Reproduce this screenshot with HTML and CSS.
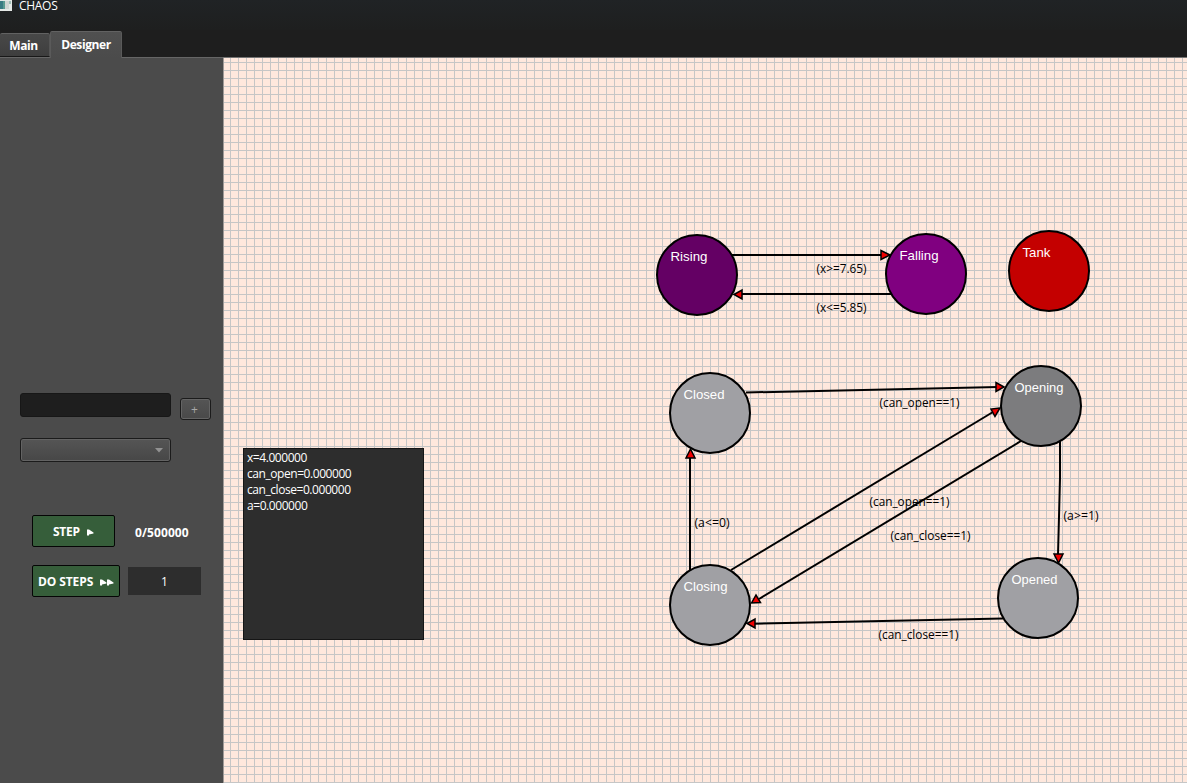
FILE: index.html
```html
<!DOCTYPE html>
<html lang="en">
<head>
<meta charset="utf-8">
<title>CHAOS</title>
<link rel="stylesheet" href="styles.css">
</head>
<body>
<div class="window">
  <header class="titlebar">
    <svg class="app-icon" width="12" height="11" viewBox="0 0 12 11"><path fill="#e4e8e6" d="M0 0h12v11H0z"/><path fill="#5b9a91" d="M0 1h9v8H0z"/><path fill="#397b83" d="M0 1h3v8H0z"/><path fill="#d0d5d3" d="M5 1h4v8H5z"/><path fill="#9cbcb5" d="M9 1h2v3H9z"/></svg>
    <span class="title">CHAOS</span>
  </header>
  <nav class="tabs">
    <div class="tab tab-main"><span>Main</span></div>
    <div class="tab tab-active"><span>Designer</span></div>
  </nav>
  <main class="body">
    <aside class="sidebar">
      <div class="row add-row">
        <div class="field"></div>
        <div class="add">+</div>
      </div>
      <div class="select"><svg width="8" height="5" viewBox="0 0 8 5"><path fill="#929292" d="M0 0h8L4 4.5z"/></svg></div>
      <div class="row step-row">
        <div class="btn step"><span>STEP</span><svg width="7" height="7" viewBox="0 0 7 7"><path fill="#fff" d="M0 0.500h2L6.500 3.500V4.500L2 5.500V6.500H0z"/></svg></div>
        <span class="count">0/500000</span>
      </div>
      <div class="row do-row">
        <div class="btn do"><span>DO STEPS</span><svg width="14" height="7" viewBox="0 0 14 7"><path fill="#fff" d="M0 0.500h2L6.500 3.500V4.500L2 5.500V6.500H0zM7 0.500h2L13.500 3.500V4.500L9 5.500V6.500H7z"/></svg></div>
        <div class="amount">1</div>
      </div>
    </aside>
    <section class="canvas">
      <svg class="diagram" width="964" height="726" viewBox="223 57 964 726">
        <defs>
          <pattern id="grid" x="230" y="62" width="8" height="8" patternUnits="userSpaceOnUse"><path fill="#c6c6c6" d="M0 0h8v1H0zM0 1h1v7H0z"/></pattern>
        </defs>
        <path fill="#ffe8dd" d="M223 57h964v726H223z"/>
        <path fill="url(#grid)" d="M223 58h964v725H223z"/>
        <path fill="#747474" d="M223 57h964v1H223z"/>
        <path fill="#a09a97" d="M223 58h1v725h-1z"/>
        <g class="edge-label">
          <text x="816.500" y="273" textLength="50" lengthAdjust="spacingAndGlyphs">(x&gt;=7.65)</text>
          <text x="816.500" y="312" textLength="50" lengthAdjust="spacingAndGlyphs">(x&lt;=5.85)</text>
          <text x="879.500" y="407" textLength="80" lengthAdjust="spacingAndGlyphs">(can_open==1)</text>
          <text x="869.500" y="506" textLength="80" lengthAdjust="spacingAndGlyphs">(can_open==1)</text>
          <text x="890.500" y="540" textLength="80" lengthAdjust="spacingAndGlyphs">(can_close==1)</text>
          <text x="878.500" y="639" textLength="80" lengthAdjust="spacingAndGlyphs">(can_close==1)</text>
          <text x="694.500" y="527" textLength="35" lengthAdjust="spacingAndGlyphs">(a&lt;=0)</text>
          <text x="1063.500" y="520" textLength="35" lengthAdjust="spacingAndGlyphs">(a&gt;=1)</text>
        </g>
        <g class="edge">
          <path d="M732 255H882"/>
          <path d="M893 294H742"/>
          <path d="M746 392.5L998 387"/>
          <path d="M690 572V457"/>
          <path d="M731 570L993 412"/>
          <path d="M1021 441L759 599"/>
          <path d="M1060 440V478L1058 555"/>
          <path d="M1003 618.5L754 623.7"/>
        </g>
        <g class="arrow">
          <path d="M890 255L881 250.5V259.5Z"/>
          <path d="M734 294.5L742 290V299Z"/>
          <path d="M1004 387L996 382.5V391.5Z"/>
          <path d="M690.5 449L686 458H695Z"/>
          <path d="M1000 408L991 409L995 416.500Z"/>
          <path d="M751.500 603L756 595L760.500 602.500Z"/>
          <path d="M1058.500 563L1054 554H1063Z"/>
          <path d="M747 623.500L755 619V628Z"/>
        </g>
        <g class="node">
          <circle cx="697" cy="275" r="40" fill="#640064"/>
          <circle cx="926" cy="274" r="40" fill="#800080"/>
          <circle cx="1049" cy="271" r="40" fill="#c40000"/>
          <circle cx="710" cy="413" r="40" fill="#a0a0a4"/>
          <circle cx="1041" cy="406" r="40" fill="#7c7c7e"/>
          <circle cx="710" cy="605" r="40" fill="#a0a0a4"/>
          <circle cx="1038" cy="598" r="40" fill="#a0a0a4"/>
        </g>
        <g class="node-label">
          <text x="670.500" y="261" textLength="37" lengthAdjust="spacingAndGlyphs">Rising</text>
          <text x="899.500" y="260" textLength="39" lengthAdjust="spacingAndGlyphs">Falling</text>
          <text x="1022.500" y="257" textLength="28" lengthAdjust="spacingAndGlyphs">Tank</text>
          <text x="683.500" y="399" textLength="41" lengthAdjust="spacingAndGlyphs">Closed</text>
          <text x="1014.500" y="392" textLength="49" lengthAdjust="spacingAndGlyphs">Opening</text>
          <text x="683.500" y="591" textLength="44" lengthAdjust="spacingAndGlyphs">Closing</text>
          <text x="1011.500" y="584" textLength="46" lengthAdjust="spacingAndGlyphs">Opened</text>
        </g>
      </svg>
      <div class="vars">
        <div>x=4.000000</div>
        <div>can_open=0.000000</div>
        <div>can_close=0.000000</div>
        <div>a=0.000000</div>
      </div>
    </section>
  </main>
</div>
</body>
</html>
```
FILE: styles.css
```css
* { box-sizing: border-box; }
body { margin: 0; overflow: hidden; font: 12px/16px "Open Sans", "Noto Sans", sans-serif; color: #fff; }
.window { width: 1187px; height: 783px; display: flex; flex-direction: column; background: #1e1e1e; }
.titlebar { height: 30px; display: flex; align-items: flex-start; background: linear-gradient(#202325, #1e1f1f); }
.app-icon { display: block; }
.title { padding-left: 7px; line-height: 12px; letter-spacing: -0.3px; }
.tabs { height: 27px; display: flex; align-items: flex-end; background: #1e1e1e; font-weight: 700; letter-spacing: -0.4px; }
.tab { display: flex; justify-content: center; border: 1px solid #626262; border-bottom: 0; border-radius: 2px 2px 0 0; }
.tab-main { width: 50px; height: 24px; padding: 4px 2px 0 0; border-left: 0; border-right-color: #555; background: linear-gradient(#484848, #3e3e3e); border-bottom: 1px solid #181818; }
.tab-active { width: 72px; height: 27px; padding-top: 5px; margin-bottom: -1px; z-index: 1; background: linear-gradient(#505050, #4b4b4b); border-color: #626262 #5a5a5a; }
.body { flex: 1; display: flex; min-height: 0; }
.sidebar { width: 223px; background: #4b4b4b; border-top: 1px solid #666; padding: 335px 0 0 20px; }
.row { display: flex; }
.add-row { height: 45px; }
.field { width: 151px; height: 24px; background: #1e1e1e; border: 1px solid #171717; border-radius: 3px; }
.add { width: 31px; height: 22px; margin: 5px 0 0 9px; padding-right: 2px; text-align: center; line-height: 21px; font-size: 12px; color: #a8a8a8; border: 1px solid #1b1b1b; border-radius: 3px; background: linear-gradient(#555, #494949); box-shadow: inset 0 0 0 1px #646464; }
.select { width: 151px; height: 24px; display: flex; align-items: center; justify-content: flex-end; padding-right: 7px; border: 1px solid #1b1b1b; border-radius: 3px; background: linear-gradient(#555, #474747); box-shadow: inset 0 0 0 1px #636363; }
.step-row { margin: 53px 0 0 12px; height: 50px; }
.do-row { margin-left: 12px; }
.btn { display: flex; align-items: center; height: 32px; padding-top: 1px; background: #365e3a; border: 1px solid #050505; border-radius: 2px; font-weight: 700; white-space: nowrap; }
.btn svg { display: block; margin-top: 1px; }
.step { width: 83px; padding-left: 20px; gap: 7px; letter-spacing: -0.25px; }
.do { width: 88px; padding-left: 5px; gap: 7px; letter-spacing: -0.1px; }
.count { margin: 10px 0 0 20px; font-weight: 700; letter-spacing: 0.1px; }
.amount { width: 73px; height: 28px; margin: 2px 0 0 8px; line-height: 30px; text-align: center; background: #2d2d2d; }
.canvas { flex: 1; position: relative; }
.diagram { display: block; }
.vars { position: absolute; left: 20px; top: 391px; width: 181px; height: 192px; padding: 1px 3px; background: #2d2d2d; border: 1px solid #151515; letter-spacing: -0.44px; }
.edge-label { font-size: 12px; fill: #000; }
.edge { fill: none; stroke: #000; stroke-width: 2; }
.arrow { fill: #f00000; stroke: #000; stroke-width: 1.5; }
.node { stroke: #000; stroke-width: 2; }
.node-label { font: 13.5px "Liberation Sans", Arial, sans-serif; fill: #fff; }
```
